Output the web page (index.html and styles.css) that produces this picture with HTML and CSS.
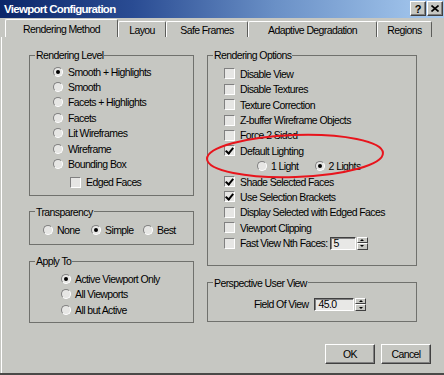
FILE: index.html
```html
<!DOCTYPE html>
<html lang="en">
<head>
    <meta charset="UTF-8">
    <meta name="viewport" content="width=device-width, initial-scale=1.0">
    <title>Viewport Configuration</title>
    <link rel="stylesheet" href="styles.css">
</head>
<body>
    <div class="dialog">
        <div class="titlebar">
            <span class="title">Viewport Configuration</span>
            <div class="title-buttons">
                <span class="tbtn">?</span>
                <span class="tbtn">
                    <svg width="8" height="7" viewBox="0 0 8 7"><path d="M0.5 0.5 L7.5 6.5 M7.5 0.5 L0.5 6.5" stroke="#000" stroke-width="1.6"/></svg>
                </span>
            </div>
        </div>

        <div class="tabs">
            <div class="tab tab-method active">Rendering Method</div>
            <div class="tab tab-layout">Layou</div>
            <div class="tab tab-safe">Safe Frames</div>
            <div class="tab tab-adaptive">Adaptive Degradation</div>
            <div class="tab tab-regions">Regions</div>
        </div>

        <div class="panel">
            <div class="columns">
                <!-- left column -->
                <div class="col">
                    <fieldset class="group level">
                        <legend>Rendering Level</legend>
                        <div class="row"><span class="radio on"></span>Smooth + Highlights</div>
                        <div class="row"><span class="radio"></span>Smooth</div>
                        <div class="row"><span class="radio"></span>Facets + Highlights</div>
                        <div class="row"><span class="radio"></span>Facets</div>
                        <div class="row"><span class="radio"></span>Lit Wireframes</div>
                        <div class="row"><span class="radio"></span>Wireframe</div>
                        <div class="row"><span class="radio"></span>Bounding Box</div>
                        <div class="row edged"><span class="check"></span>Edged Faces</div>
                    </fieldset>

                    <fieldset class="group transparency">
                        <legend>Transparency</legend>
                        <div class="row choices">
                            <span class="opt"><span class="radio"></span>None</span>
                            <span class="opt"><span class="radio on"></span>Simple</span>
                            <span class="opt"><span class="radio"></span>Best</span>
                        </div>
                    </fieldset>

                    <fieldset class="group apply">
                        <legend>Apply To</legend>
                        <div class="row"><span class="radio on"></span>Active Viewport Only</div>
                        <div class="row"><span class="radio"></span>All Viewports</div>
                        <div class="row"><span class="radio"></span>All but Active</div>
                    </fieldset>
                </div>

                <!-- right column -->
                <div class="col">
                    <fieldset class="group options">
                        <legend>Rendering Options</legend>
                        <div class="row"><span class="check"></span>Disable View</div>
                        <div class="row"><span class="check"></span>Disable Textures</div>
                        <div class="row"><span class="check"></span>Texture Correction</div>
                        <div class="row"><span class="check"></span>Z-buffer Wireframe Objects</div>
                        <div class="row"><span class="check"></span>Force 2 Sided</div>
                        <div class="row"><span class="check on"></span>Default Lighting</div>
                        <div class="row lights">
                            <span class="opt"><span class="radio"></span>1 Light</span>
                            <span class="opt"><span class="radio on"></span>2 Lights</span>
                        </div>
                        <div class="row"><span class="check on"></span>Shade Selected Faces</div>
                        <div class="row"><span class="check on"></span>Use Selection Brackets</div>
                        <div class="row"><span class="check"></span>Display Selected with Edged Faces</div>
                        <div class="row"><span class="check"></span>Viewport Clipping</div>
                        <div class="row"><span class="check"></span>Fast View Nth Faces:
                            <span class="spinner nth">
                                <span class="field">5</span>
                                <span class="arrows"><span class="up"></span><span class="down"></span></span>
                            </span>
                        </div>
                    </fieldset>

                    <fieldset class="group perspective">
                        <legend>Perspective User View</legend>
                        <div class="row">Field Of View
                            <span class="spinner fov">
                                <span class="field">45.0</span>
                                <span class="arrows"><span class="up"></span><span class="down"></span></span>
                            </span>
                        </div>
                    </fieldset>
                </div>
            </div>

            <div class="buttons">
                <button class="btn">OK</button>
                <button class="btn">Cancel</button>
            </div>
        </div>

        <!-- hand drawn annotation -->
        <svg class="annotation" width="444" height="375" viewBox="0 0 444 375">
            <ellipse cx="295" cy="156" rx="88" ry="21" transform="rotate(-2 295 156)" fill="none" stroke="#e8141c" stroke-width="2"/>
        </svg>
    </div>
</body>
</html>
```

FILE: styles.css
```css
:root {
    --face: #c6c7c2;
    --light: #ffffff;
    --shadow: #808080;
    --dark: #404040;
    --line: #70716d;
    --well: #e6e6e4;
}

* {
    box-sizing: border-box;
}

body {
    margin: 0;
    background: var(--face);
    color: #000;
    font-family: "Liberation Sans", Arial, sans-serif;
    font-size: 10.5px;
    letter-spacing: -0.6px;
}

.dialog {
    position: relative;
    width: 444px;
    height: 375px;
    background: var(--face);
    border-bottom: 2px solid #4a4a48;
    overflow: hidden;
}

/* title bar */
.titlebar {
    height: 18px;
    display: flex;
    justify-content: space-between;
    align-items: center;
    padding: 0 1px 0 4px;
    background: linear-gradient(to right, #0b2669 0%, #2a4c93 30%, #6a90c6 62%, #a9ccf1 100%);
}

.title {
    color: #fff;
    font-weight: bold;
    font-size: 11.5px;
    letter-spacing: -0.7px;
}

.title-buttons {
    display: flex;
    gap: 1px;
    align-self: flex-start;
    margin-top: 1px;
}

.tbtn {
    width: 16px;
    height: 15px;
    display: flex;
    align-items: center;
    justify-content: center;
    background: var(--face);
    border: 1px solid;
    border-color: var(--light) var(--dark) var(--dark) var(--light);
    box-shadow: inset -1px -1px var(--shadow);
    font-weight: bold;
    font-size: 11px;
    letter-spacing: 0;
}

/* tabs */
.tabs {
    display: flex;
    align-items: flex-end;
    height: 19px;
    padding-left: 5px;
}

.tab {
    height: 16px;
    display: flex;
    align-items: center;
    justify-content: center;
    border: 1px solid;
    border-bottom: none;
    border-color: var(--light) #5c5d5a transparent var(--light);
    border-radius: 2px 2px 0 0;
    white-space: nowrap;
}

.tab.active {
    height: 18px;
}

.tab-method { width: 113px; }
.tab-layout { width: 48px; }
.tab-safe { width: 82px; }
.tab-adaptive { width: 129px; }
.tab-regions { width: 55px; }

/* page */
.panel {
    height: 336px;
    margin-left: 1px;
    border-left: 1px solid var(--light);
    padding: 12px 13px 0 27px;
}

.columns {
    display: grid;
    grid-template-columns: 165px 210px;
    column-gap: 13px;
}

.col {
    display: flex;
    flex-direction: column;
}

.group {
    margin: 0;
    min-width: 0;
    padding-left: 0;
    padding-right: 0;
    border: 1px solid var(--line);
}

.group legend {
    margin-left: 5px;
    padding: 0 1px;
    line-height: 12px;
}

.row {
    display: flex;
    align-items: center;
    height: 15.4px;
    white-space: nowrap;
}

.opt {
    display: flex;
    align-items: center;
}

.radio {
    flex: none;
    width: 10px;
    height: 10px;
    margin-right: 5px;
    display: flex;
    align-items: center;
    justify-content: center;
    border-radius: 50%;
    background: var(--well);
    border: 1px solid;
    border-color: var(--shadow) var(--light) var(--light) var(--shadow);
}

.radio.on::after {
    content: "";
    width: 4px;
    height: 4px;
    border-radius: 50%;
    background: #000;
}

.check {
    flex: none;
    position: relative;
    width: 11px;
    height: 11px;
    margin-right: 5px;
    background: var(--well);
    border: 1px solid;
    border-color: var(--shadow) var(--light) var(--light) var(--shadow);
}

.check.on::after {
    content: "";
    position: absolute;
    left: 2px;
    top: 0px;
    width: 3px;
    height: 6px;
    border: solid #000;
    border-width: 0 2px 2px 0;
    transform: rotate(40deg);
}

/* group specifics */
.level {
    padding-top: 3px;
    padding-bottom: 5px;
}

.level .row {
    margin-left: 23px;
}

.level .edged {
    margin-top: 2.6px;
    margin-left: 40px;
}

.transparency {
    margin-top: 10px;
    padding-top: 4.5px;
    padding-bottom: 6.5px;
}

.choices {
    display: grid;
    grid-template-columns: 48px 52px auto;
    margin-left: 13px;
}

.choices .radio {
    margin-right: 4px;
}

.apply {
    margin-top: 10px;
    padding-top: 4.3px;
    padding-bottom: 4.5px;
}

.apply .row {
    margin-left: 31px;
}

.apply .radio {
    margin-right: 4px;
}

.options {
    padding-top: 5.3px;
    padding-bottom: 14px;
}

.options .row {
    height: 15.38px;
    margin-left: 16px;
}

.options .lights {
    margin-left: 49px;
}

.lights .opt:first-child {
    width: 57.6px;
}

.lights .radio {
    margin-right: 4px;
}

.perspective {
    margin-top: 11px;
    padding-top: 8px;
    padding-bottom: 9.5px;
}

.perspective .row {
    height: 15px;
    margin-left: 46px;
}

/* spinner fields */
.spinner {
    display: flex;
    align-items: stretch;
    height: 13px;
    margin-left: 2px;
}

.fov {
    margin-left: 6px;
}

.field {
    display: flex;
    align-items: center;
    padding-left: 3px;
    background: #e8e8e6;
    border: 1px solid;
    border-color: var(--dark) var(--light) var(--light) var(--dark);
    box-shadow: inset 1px 1px var(--shadow);
}

.nth .field { width: 26px; }
.fov .field { width: 40px; }

.arrows {
    display: flex;
    flex-direction: column;
    width: 11px;
    margin-left: 1px;
}

.arrows span {
    flex: 1;
    display: flex;
    align-items: center;
    justify-content: center;
    background: var(--face);
    border: 1px solid;
    border-color: var(--light) var(--dark) var(--dark) var(--light);
}

.arrows .up::after,
.arrows .down::after {
    content: "";
    border-left: 2px solid transparent;
    border-right: 2px solid transparent;
}

.arrows .up::after {
    border-bottom: 2px solid #000;
}

.arrows .down::after {
    border-top: 2px solid #000;
}

/* buttons */
.buttons {
    display: flex;
    justify-content: flex-end;
    gap: 6px;
    margin-top: 21px;
}

.btn {
    width: 50px;
    height: 20px;
    padding: 0;
    font: inherit;
    letter-spacing: inherit;
    color: #000;
    background: var(--face);
    border: 1px solid;
    border-color: var(--light) var(--dark) var(--dark) var(--light);
    box-shadow: inset -1px -1px var(--shadow);
}

.annotation {
    position: absolute;
    left: 0;
    top: 0;
    pointer-events: none;
}
```
